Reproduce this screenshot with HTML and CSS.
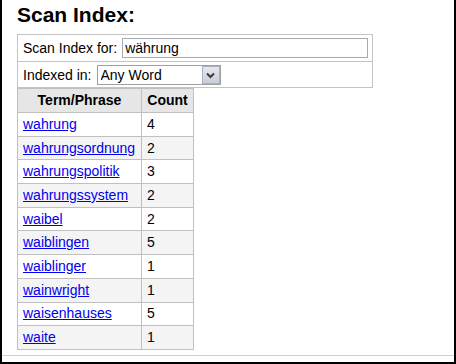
FILE: index.html
```html
<!DOCTYPE html>
<html lang="de">
<head>
<meta charset="UTF-8" />
<title>Scan Index</title>
<link rel="stylesheet" href="styles.css">
</head>
<body>

<div class="page">
  <div class="content">
    <h1>Scan Index:</h1>

    <!-- Suchformular -->
    <table class="scan-form">
      <tr class="row-for">
        <td>
          <div class="field">
            <label for="term">Scan Index for:</label>
            <input type="text" id="term" value="währung" />
          </div>
        </td>
      </tr>
      <tr class="row-in">
        <td>
          <div class="field">
            <label for="mode">Indexed in:</label>
            <span class="select-wrap">
              <select id="mode">
                <option>Any Word</option>
                <option>Title</option>
                <option>Subject</option>
              </select>
              <span class="arrow">
                <svg width="15" height="16" viewBox="0 0 15 16"><path d="M4 6.5 L7.5 10 L11 6.5" fill="none" stroke="#3a3a3a" stroke-width="2"/></svg>
              </span>
            </span>
          </div>
        </td>
      </tr>
    </table>

    <!-- Ergebnisse -->
    <table class="results">
      <colgroup>
        <col class="c-term" />
        <col class="c-count" />
      </colgroup>
      <thead>
        <tr><th>Term/Phrase</th><th>Count</th></tr>
      </thead>
      <tbody>
        <tr><td><a href="#">wahrung</a></td><td>4</td></tr>
        <tr><td><a href="#">wahrungsordnung</a></td><td>2</td></tr>
        <tr><td><a href="#">wahrungspolitik</a></td><td>3</td></tr>
        <tr><td><a href="#">wahrungssystem</a></td><td>2</td></tr>
        <tr><td><a href="#">waibel</a></td><td>2</td></tr>
        <tr><td><a href="#">waiblingen</a></td><td>5</td></tr>
        <tr><td><a href="#">waiblinger</a></td><td>1</td></tr>
        <tr><td><a href="#">wainwright</a></td><td>1</td></tr>
        <tr><td><a href="#">waisenhauses</a></td><td>5</td></tr>
        <tr><td><a href="#">waite</a></td><td>1</td></tr>
      </tbody>
    </table>
  </div>
  <div class="rule"></div>
</div>

</body>
</html>
```

FILE: styles.css
```css
/* Reset */
* {
  margin: 0; padding: 0; box-sizing: border-box;
}
html, body {
  background: #fff;
  font-family: 'Liberation Sans', Arial, sans-serif;
  font-size: 14px;
  color: #000;
}

/* Rahmen der Seite */
.page {
  height: 364px;
  display: flex;
  flex-direction: column;
  border: 2px solid #000;
  border-top: none;
}
.content {
  flex: 1;
  padding: 0 15px;
}
.rule {
  height: 7px;
  border-top: 1px solid #cfcfcf;
}

h1 {
  font-size: 21px;
  font-weight: 700;
  line-height: 24px;
  margin: 3px 0 7px;
}

/* Formular */
.scan-form {
  width: 356px;
  border-collapse: collapse;
}
.scan-form td {
  border: 1px solid #c4c4c4;
  padding: 0 4px 0 5px;
  vertical-align: middle;
}
.scan-form .row-for td { height: 27px; }
.scan-form .row-in td { height: 26px; }
.field {
  display: flex;
  align-items: center;
  gap: 5px;
}
.field label {
  white-space: nowrap;
  flex-shrink: 0;
}
.field input {
  flex: 1;
  min-width: 0;
  height: 20px;
  border: 1px solid #a5acb2;
  padding: 0 2px;
  font: 14px 'Liberation Sans', Arial, sans-serif;
  color: #000;
}
.select-wrap {
  position: relative;
  display: inline-block;
}
.select-wrap select {
  appearance: none;
  -webkit-appearance: none;
  display: block;
  width: 124px;
  height: 20px;
  border: 1px solid #a0a0a0;
  border-radius: 0;
  background: #fff;
  padding: 0 0 0 3px;
  font: 14px 'Liberation Sans', Arial, sans-serif;
  color: #000;
}
.select-wrap .arrow {
  position: absolute;
  top: 1px;
  right: 1px;
  width: 18px;
  height: 18px;
  display: flex;
  align-items: center;
  justify-content: center;
  background: linear-gradient(#e4e8f0, #c9cfda);
  border: 1px solid #aab2c0;
  pointer-events: none;
}

/* Ergebnistabelle */
.results {
  border-collapse: collapse;
  table-layout: fixed;
  width: 176px;
}
.results .c-term { width: 124px; }
.results .c-count { width: 52px; }
.results th,
.results td {
  border: 1px solid #c0c0c0;
  padding: 4px 5px;
  line-height: 15px;
  text-align: left;
  white-space: nowrap;
}
.results th {
  background: #e6e6e6;
  text-align: center;
  font-weight: 700;
}
.results tbody td {
  padding-top: 3.85px;
  padding-bottom: 3.85px;
}
.results tbody tr:nth-child(even) td {
  background: #f4f4f4;
}
.results a {
  color: #0000ee;
}
```
